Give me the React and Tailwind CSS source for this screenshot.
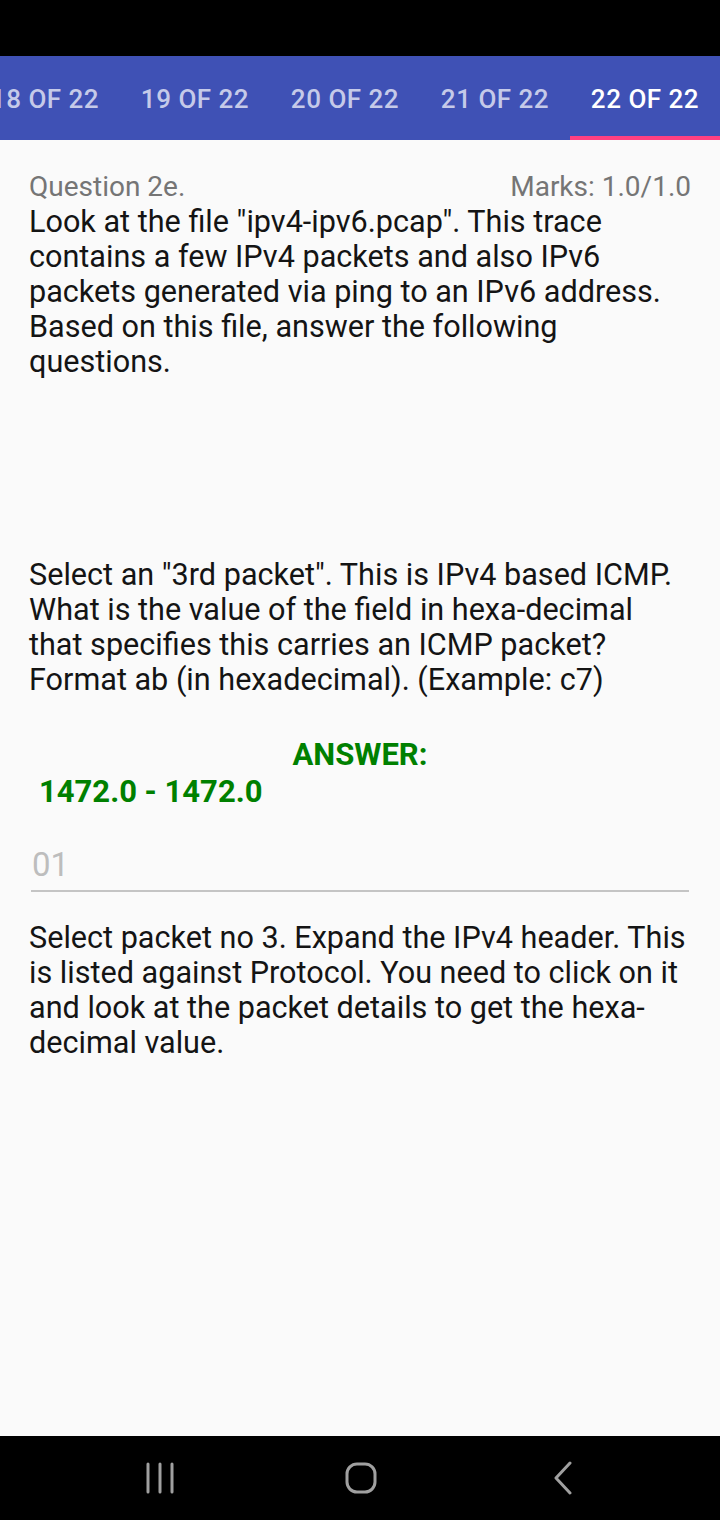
const tabs = ['18 OF 22', '19 OF 22', '20 OF 22', '21 OF 22', '22 OF 22'];

function NavBar() {
    return (
        <div className="h-[84px] bg-black grid grid-cols-[202px_202px_202px] justify-center items-center">
            <div className="flex justify-center pl-[4px]">
                <svg width="30" height="32" viewBox="0 0 30 32" fill="none" stroke="#a0a0a0" strokeWidth="3" strokeLinecap="round">
                    <path d="M3 2v28M15 2v28M27 2v28" />
                </svg>
            </div>
            <div className="flex justify-center pl-[2px]">
                <svg width="32" height="32" viewBox="0 0 32 32" fill="none" stroke="#a0a0a0" strokeWidth="3">
                    <rect x="2" y="2" width="28" height="28" rx="10" />
                </svg>
            </div>
            <div className="flex justify-center pl-[2px]">
                <svg width="20" height="34" viewBox="0 0 20 34" fill="none" stroke="#a0a0a0" strokeWidth="3" strokeLinecap="round" strokeLinejoin="round">
                    <path d="M17 2L3 17l14 15" />
                </svg>
            </div>
        </div>
    );
}

export default function App() {
    return (
        <div className="w-[720px] h-[1520px] flex flex-col bg-[#fafafa] font-['Roboto',sans-serif] overflow-hidden">
            {/* Status bar */}
            <div className="h-[56px] bg-black shrink-0" />

            {/* Tabs */}
            <div className="h-[84px] bg-[#3f51b5] shrink-0 overflow-hidden">
                <div className="flex h-full ml-[-30px]">
                    {tabs.map((t, i) => {
                        const active = i === tabs.length - 1;
                        return (
                            <div key={t} className="w-[150px] shrink-0 h-full flex flex-col">
                                <div className={`flex-1 flex items-center justify-center pt-[6px] text-[26px] font-medium tracking-[0.5px] ${active ? 'text-white' : 'text-[#c5cae9]'}`}>
                                    {t}
                                </div>
                                <div className={`h-[4px] ${active ? 'bg-[#ff4081]' : ''}`} />
                            </div>
                        );
                    })}
                </div>
            </div>

            {/* Content */}
            <div className="flex-1 px-[29px] pt-[30px] text-[30.6px] leading-[35px] text-[#141414]">
                <div className="flex justify-between text-[28px] leading-[34px] text-[#757575]">
                    <span>Question 2e.</span>
                    <span>Marks: 1.0/1.0</span>
                </div>
                <p>
                    Look at the file "ipv4-ipv6.pcap". This trace contains a few IPv4 packets and also IPv6 packets generated via ping to an IPv6 address. Based on this file, answer the following questions.
                </p>

                <div className="h-[178px]" />

                <p>
                    Select an "3rd packet". This is IPv4 based ICMP. What is the value of the field in hexa-decimal that specifies this carries an ICMP packet? Format ab (in hexadecimal). (Example: c7)
                </p>

                <div className="mt-[40px] text-center font-bold text-[#008000] text-[31px] leading-[36px]">ANSWER:</div>
                <div className="pl-[10px] font-bold text-[#008000] text-[31px] leading-[38px]">1472.0 - 1472.0</div>

                <div className="mt-[34px] mx-[2px] border-b-2 border-[#c4c4c4] pb-[5px] pl-[1px] text-[33px] leading-[40px] text-[#bdbdbd]">
                    01
                </div>

                <p className="mt-[28px] mr-[-4px]">
                    Select packet no 3. Expand the IPv4 header. This is listed against Protocol. You need to click on it and look at the packet details to get the hexa-decimal value.
                </p>
            </div>

            <NavBar />
        </div>
    );
}
